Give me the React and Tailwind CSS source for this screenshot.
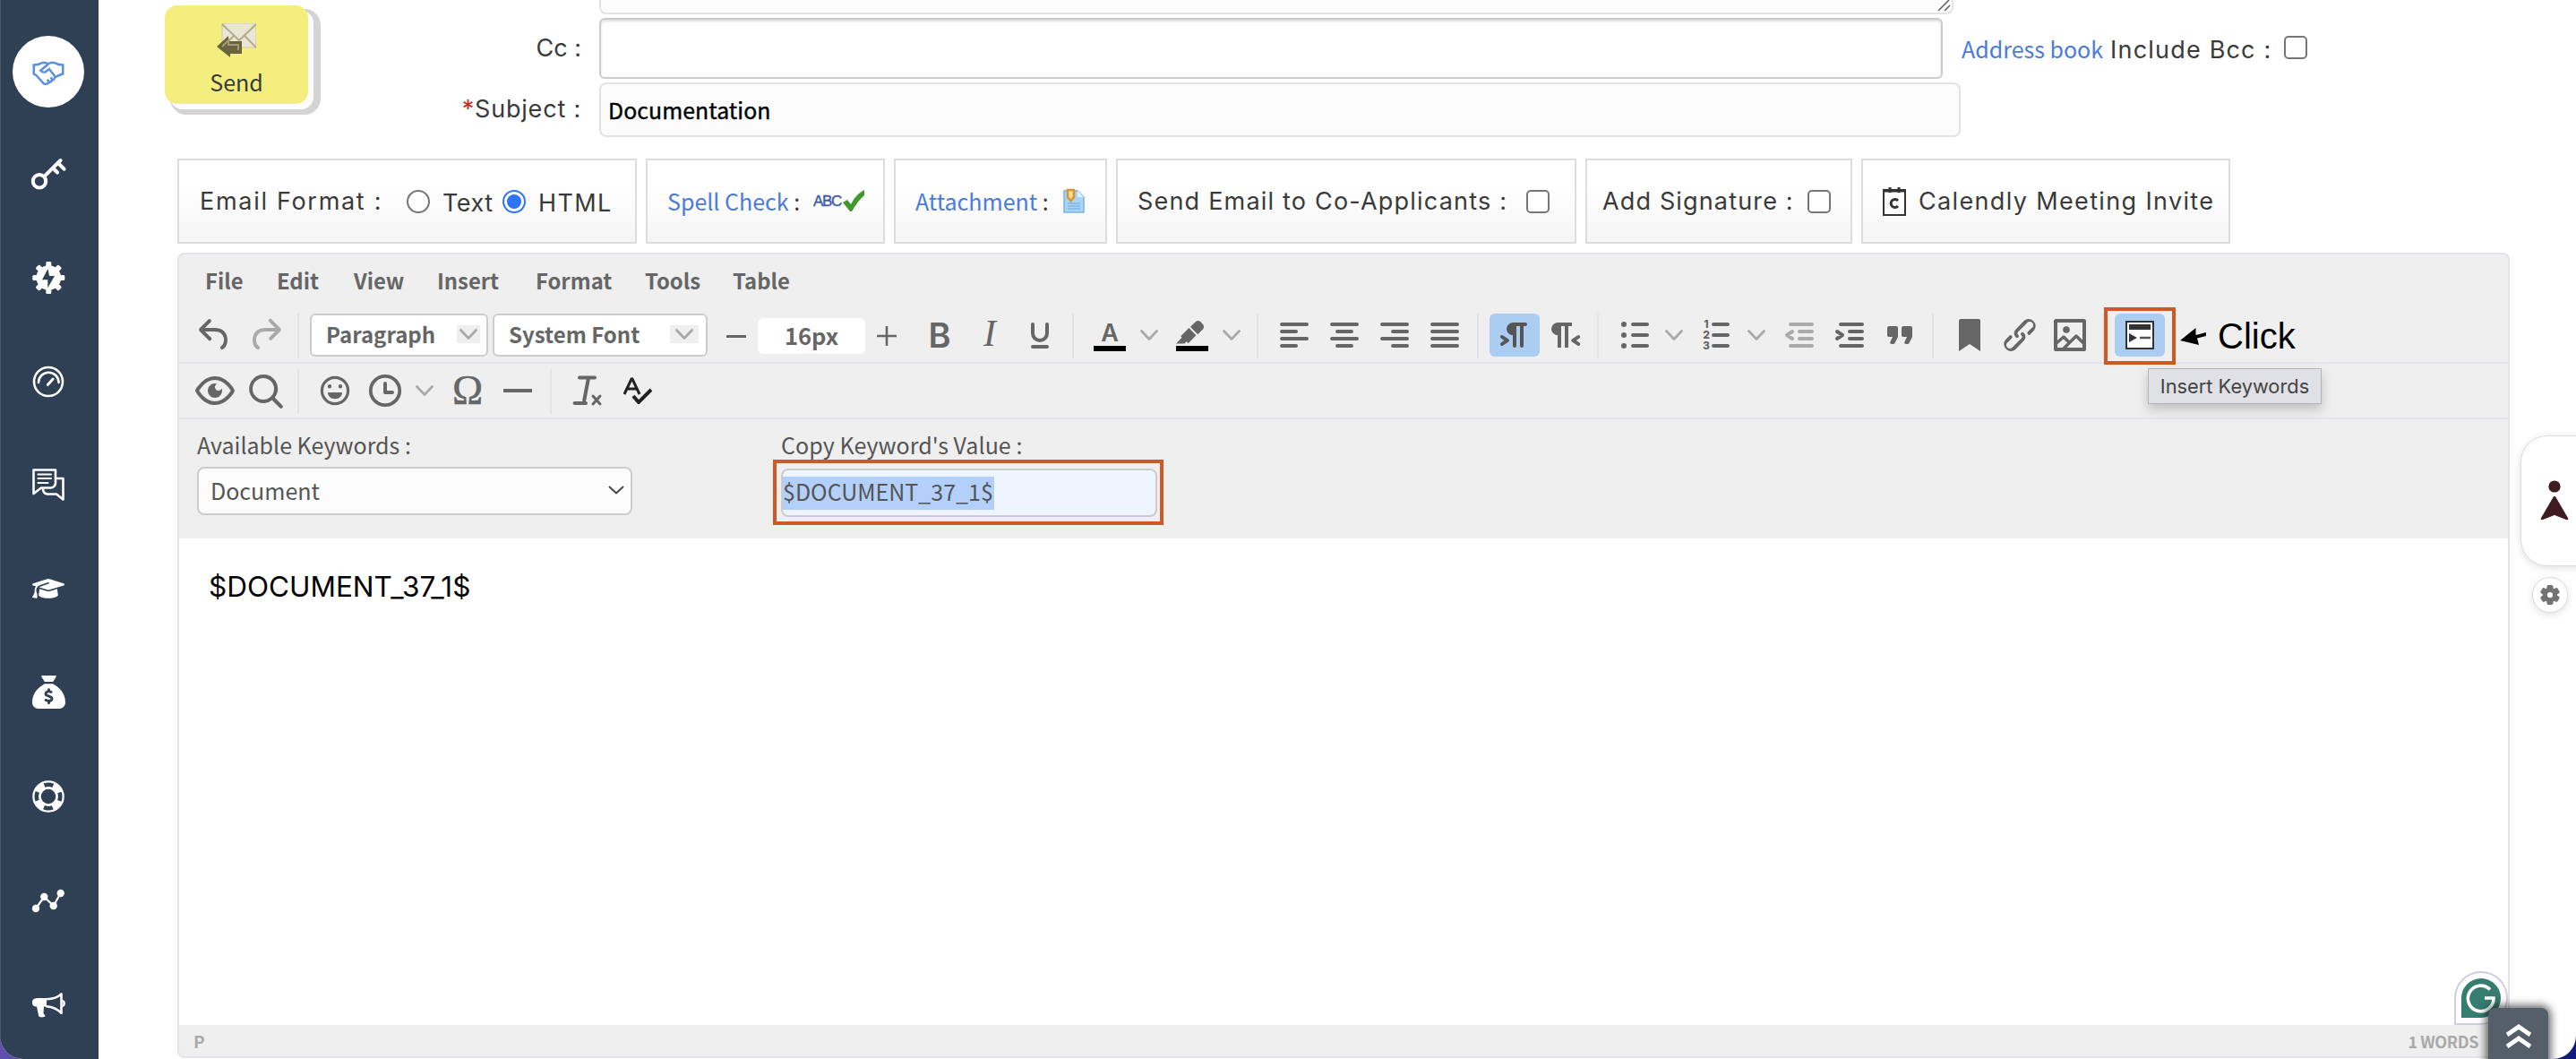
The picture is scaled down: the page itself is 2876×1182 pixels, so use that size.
import React, { useState } from 'react';
import { FaGraduationCap, FaSackDollar } from 'react-icons/fa6';
import { LiaHandshake } from 'react-icons/lia';

const UI = "font-['Noto_Sans_CJK_SC',sans-serif]";
const LABEL = "font-['Inter',sans-serif] text-[27px] leading-[34px] text-[#3a3a3a] whitespace-nowrap";

// 40x40 drawings used in the side navigation
const NavSvg = ({ children }) => (
  <svg viewBox="0 0 40 40" className="size-10" fill="none" stroke="#fff" strokeWidth="2.6" strokeLinejoin="round" strokeLinecap="round">
    {children}
  </svg>
);

const KeyIcon = () => (
  <NavSvg>
    <circle cx="10" cy="28.3" r="7.2" strokeWidth="4" />
    <path d="M15.5 22.8 33.5 5M31.5 8.5l6 6.2M26 14.5l4 4" strokeWidth="4" />
  </NavSvg>
);

const GearBoltIcon = () => (
  <NavSvg>
    <g fill="#fff" stroke="none">
      <circle cx="20.3" cy="20" r="13.8" />
      {[0, 45, 90, 135, 180, 225, 270, 315].map((a) => (
        <rect key={a} x="17.3" y="2" width="6" height="8" rx="1.5" transform={`rotate(${a} 20.3 20)`} />
      ))}
      <path d="M19.5 10 13 22.3h6.3v9L27 18h-6z" fill="#2f4055" />
    </g>
  </NavSvg>
);

const GaugeIcon = () => (
  <NavSvg>
    <circle cx="20" cy="20" r="16" />
    <path d="M9 21a11.3 11.3 0 0 1 22.6 0" />
    <path d="m19.3 23.4 5.8-6.4" strokeWidth="3" />
  </NavSvg>
);

const ChatIcon = () => (
  <NavSvg>
    <path d="M3.5 3.5h24.5v14.5a5.5 5.5 0 0 1-5.5 5.5H12l-8.5 6.5z" />
    <path d="M29 13h7.5v23.5l-7.500-6H19a6 6 0 0 1-5-5" />
    <path d="M8.5 8.5h14.500M8.5 13h14.500M8.5 18h11" strokeWidth="2" />
  </NavSvg>
);

const RingIcon = () => (
  <NavSvg>
    <circle cx="20" cy="20" r="13" strokeWidth="9.5" />
    <circle cx="20" cy="20" r="13.2" stroke="#2f4055" strokeWidth="4.6" strokeLinecap="butt" strokeDasharray="10 10.73" strokeDashoffset="5" />
  </NavSvg>
);

const ChartIcon = () => (
  <NavSvg>
    <path d="M6 29 15.3 16l10.400 10 8-14" strokeWidth="2.2" />
    <g fill="#fff" stroke="none">
      <circle cx="6" cy="29" r="4.2" />
      <circle cx="15.3" cy="16" r="4.2" />
      <circle cx="25.7" cy="26" r="4.2" />
      <circle cx="33.7" cy="12" r="4.2" />
    </g>
  </NavSvg>
);

const HornIcon = () => (
  <NavSvg>
    <path d="M18 14h-9c-4 0-7 1-7 4.800s2 4.800 5 4.800l2 10c.6 2.400 6 2.400 7.500.4l-2-3 .5-7.400h3z" fill="#fff" stroke="none" />
    <path d="M18 15.300c7-.3 13-2.500 16.500-6v21.500c-4-4-10-7-16.500-7.500" />
    <path d="M36.500 17.500c1.500.5 1.500 4.500 0 5" />
  </NavSvg>
);

const navItems = [
  KeyIcon,
  GearBoltIcon,
  GaugeIcon,
  ChatIcon,
  () => <FaGraduationCap className="size-9 scale-y-[0.86]" />,
  () => <FaSackDollar className="size-[37px]" />,
  RingIcon,
  ChartIcon,
  HornIcon,
];

// 24 grid icons of the editor toolbar, drawn at 48px
const Ico = ({ children, color = '#666', line = false }) => (
  <svg
    viewBox="0 0 24 24"
    className="size-12 shrink-0"
    fill={line ? 'none' : color}
    stroke={line ? color : 'none'}
    strokeWidth="2"
    strokeLinecap="round"
    strokeLinejoin="round"
    fillRule="evenodd"
  >
    {children}
  </svg>
);

const Btn = ({ children, active }) => (
  <button className={`flex h-12 w-14 shrink-0 items-center justify-center rounded-md ${active ? 'bg-[#abcdf2]' : ''}`}>{children}</button>
);

const Chevron = () => (
  <svg viewBox="0 0 20 12" className="h-3 w-5" fill="none" stroke="#aaa" strokeWidth="2.8" strokeLinecap="round" strokeLinejoin="round">
    <path d="m1.500 1.500 8.500 9 8.500-9" />
  </svg>
);

const Split = ({ children }) => (
  <div className="flex w-[92px] shrink-0">
    <Btn>{children}</Btn>
    <div className="flex h-12 w-8 items-center justify-center">
      <Chevron />
    </div>
  </div>
);

const Sep = () => <div className="ml-2 mr-3 h-[50px] w-0.5 shrink-0 bg-[#e3e3eb]" />;

const Select = ({ label, className, boxClass }) => (
  <div className={`flex h-12 shrink-0 items-center justify-between rounded-md border-2 border-[#ccc] bg-white pb-0.5 ${className}`}>
    <span className="text-2xl leading-8 font-bold text-[#666] whitespace-nowrap">{label}</span>
    <span className={`flex h-5 items-center justify-center bg-[#efefef] ${boxClass}`}>
      <Chevron />
    </span>
  </div>
);

const Checkbox = ({ className = '' }) => <span className={`inline-block size-[26px] shrink-0 rounded-[5px] border-2 border-[#767676] bg-white ${className}`} />;

const Box = ({ children, className }) => (
  <div className={`flex h-[95px] shrink-0 items-center border-2 border-[#ddd] bg-linear-to-b from-white from-30% to-[#f5f5f5] ${className}`}>{children}</div>
);

const Sidebar = () => (
  <nav className="flex w-[110px] shrink-0 flex-col items-center border-l border-[#4a5a6c] bg-[#2f4055] pr-[3px] pt-10 text-white">
    <div className="flex size-20 items-center justify-center rounded-full bg-white text-[#5b90df]">
      <LiaHandshake className="size-10" />
    </div>
    <div className="mt-[54px] flex flex-col gap-[75.8px]">
      {navItems.map((Item, i) => (
        <div key={i} className="flex size-10 items-center justify-center">
          <Item />
        </div>
      ))}
    </div>
  </nav>
);

const ComposeForm = () => (
  <div className="flex h-[177px] pl-[74px]">
    <button className={`mt-1.5 flex h-[110px] w-40 shrink-0 flex-col items-center rounded-[14px] bg-[#f4ee7e] shadow-[6px_6px_0_0_#fff,10px_8px_0_4px_#d4d4d4] ${UI}`}>
      <svg viewBox="0 0 44 38" className="mt-5 h-[38px] w-11">
        <rect x="6" y="0" width="38" height="27" fill="#e9e6d6" stroke="#cfc9b0" />
        <path d="m6 1 19 18L44 1M6 27l13-13m25 13L31 14" fill="none" stroke="#b3ab8a" strokeWidth="2" />
        <path d="M0 26 13 14v6h15v14H15v4z" fill="#6a6340" />
        <path d="M6 26 13 19v5h11v6" fill="none" stroke="#a39c73" strokeWidth="2" />
      </svg>
      <span className="mt-[11px] text-[25px] leading-8 text-[#3a3a3a]">Send</span>
    </button>

    <div className="flex w-[305px] shrink-0 flex-col items-end">
      <span className={`mt-[37px] ${LABEL}`}>Cc :</span>
      <span className={`mt-[34px] tracking-[0.8px] ${LABEL}`}>
        <span className="text-[#c02b1d]">*</span>Subject :
      </span>
    </div>

    <div className="ml-5 flex flex-col">
      <div className="flex h-4 w-[1512px] justify-end rounded-b-lg border-2 border-t-0 border-[#e3e3e3] bg-[#fcfcfc]">
        <svg viewBox="0 0 16 14" className="h-3.5 w-4" stroke="#666" strokeWidth="1.6">
          <path d="M1 12 13 0M8 12l6-6" />
        </svg>
      </div>
      <div className="mt-1 flex items-center">
        <input className="h-[68px] w-[1500px] rounded-md border-2 border-[#ccc] bg-white shadow-[inset_0_2px_3px_#ddd]" />
        <span className={`ml-[21px] text-[25px] leading-8 text-[#4a7bdc] whitespace-nowrap ${UI}`}>Address book</span>
        <span className={`ml-2 mt-1 tracking-[1.2px] ${LABEL}`}>Include Bcc :</span>
        <Checkbox className="mb-0.5 ml-[13px]" />
      </div>
      <div className={`mt-1 flex h-[61px] w-[1520px] items-center rounded-lg border-2 border-[#e3e3e3] bg-[#fcfcfc] pb-0.5 pl-2 text-[24.8px] leading-8 tracking-[0.1px] text-black [-webkit-text-stroke:0.4px_#000] ${UI}`}>
        Documentation
      </div>
    </div>
  </div>
);

const OptionBoxes = () => (
  <div className="flex gap-2.5 pl-[88px]">
    <Box className="w-[513px] pl-[23px]">
      <span className={`w-[231px] tracking-[1.7px] ${LABEL}`}>Email Format :</span>
      <span className="size-[26px] shrink-0 rounded-full border-2 border-[#767676] bg-white" />
      <span className={`ml-3.5 w-[67px] pt-1 tracking-[0.5px] ${LABEL}`}>Text</span>
      <span className="flex size-[26px] shrink-0 items-center justify-center rounded-full border-2 border-[#2f74f6] bg-white">
        <span className="size-4 rounded-full bg-[#2f74f6]" />
      </span>
      <span className={`ml-3.5 pt-1 tracking-[1.4px] ${LABEL}`}>HTML</span>
    </Box>
    <Box className={`w-[267px] pb-0.5 pl-[22px] text-[25px] leading-8 text-[#4a7bdc] ${UI}`}>
      <span className="w-[163px] whitespace-nowrap">
        Spell Check <span className="text-[#3a3a3a]">:</span>
      </span>
      <span className="w-[31px] pt-0.5 font-['Liberation_Sans',sans-serif] text-[17px] tracking-[-1.4px] text-[#4059a6] [-webkit-text-stroke:0.4px_#4059a6]">ABC</span>
      <svg viewBox="0 0 24 24" className="ml-0.5 size-6" fill="#3f9a2b">
        <path d="M0 14 5 11l4 5C13 8 18 3 24 0v6C18 11 14 17 10 24H8z" />
      </svg>
    </Box>
    <Box className={`w-[238px] pb-0.5 pl-[22px] text-[25px] leading-8 text-[#4a7bdc] ${UI}`}>
      <span className="w-[165px] whitespace-nowrap">
        Attachment <span className="text-[#3a3a3a]">:</span>
      </span>
      <svg viewBox="0 0 24 28" className="h-7 w-6">
        <path d="M1 3h15l7 7v17H1z" fill="#a9d4f5" stroke="#7ab3e3" strokeWidth="1.5" />
        <path d="M16 3v7h7" fill="#e2f2fd" />
        <path d="M5 17h14M5 20h14M5 23h14" stroke="#6ea8da" />
        <path d="M5 2h7v8l-3.500 4L5 10z" fill="#f6dca0" stroke="#d8962b" strokeWidth="2.5" />
      </svg>
    </Box>
    <Box className="w-[514px] pl-[22px]">
      <span className={`w-[434px] tracking-[1.2px] ${LABEL}`}>Send Email to Co-Applicants :</span>
      <Checkbox />
    </Box>
    <Box className="w-[298px] pl-[17px]">
      <span className={`w-[229px] tracking-[1.15px] ${LABEL}`}>Add Signature :</span>
      <Checkbox />
    </Box>
    <Box className="w-[412px] pl-[22px]">
      <svg viewBox="0 0 26 32" className="h-8 w-[26px]" fill="none" stroke="#333">
        <rect x="1" y="3" width="24" height="28" strokeWidth="2" />
        <path d="M1 4h24" strokeWidth="3" />
        <path d="M8 0v6M18 0v6" strokeWidth="3" />
        <path d="M17 15a4.500 4.500 0 1 0 0 6" strokeWidth="3" />
      </svg>
      <span className={`ml-3.5 tracking-[1.35px] ${LABEL}`}>Calendly Meeting Invite</span>
    </Box>
  </div>
);

const menus = [
  ['File', 'w-20'],
  ['Edit', 'w-[86px]'],
  ['View', 'w-[93px]'],
  ['Insert', 'w-[110px]'],
  ['Format', 'w-[122px]'],
  ['Tools', 'w-[98px]'],
  ['Table', 'w-20'],
];

const ToolbarTop = () => (
  <div className="flex h-16 items-start border-b-2 border-[#e3e3eb] pl-3 pt-2">
    <Btn>
      <Ico><path d="M6.400 8H12c3.700 0 6.200 2 6.800 5.100.6 2.700-.4 5.600-2.300 6.800a1 1 0 0 1-1-1.800c1.100-.6 1.800-2.700 1.400-4.600-.5-2.100-2.100-3.500-4.900-3.500H6.400l3.300 3.300a1 1 0 1 1-1.400 1.400l-5-5a1 1 0 0 1 0-1.400l5-5a1 1 0 0 1 1.400 1.400L6.400 8Z" /></Ico>
    </Btn>
    <Btn>
      <Ico color="#aaa"><path d="M17.600 10H12c-2.800 0-4.400 1.400-4.900 3.500-.4 2 .3 4 1.400 4.600a1 1 0 1 1-1 1.800c-2-1.200-2.900-4.100-2.300-6.800.6-3 3-5.100 6.800-5.100h5.600l-3.300-3.300a1 1 0 1 1 1.400-1.400l5 5a1 1 0 0 1 0 1.400l-5 5a1 1 0 0 1-1.400-1.400l3.300-3.300Z" /></Ico>
    </Btn>
    <Sep />
    <Select label="Paragraph" className="w-[199px] pl-4 pr-[7px]" boxClass="w-[26px]" />
    <Select label="System Font" className="ml-[5px] w-60 pl-4 pr-2" boxClass="w-8" />
    <div className="ml-2 mr-[7px] flex h-[50px] items-center">
      <span className="flex w-12 justify-center"><span className="h-[3px] w-[22px] bg-[#666]" /></span>
      <span className="flex h-10 w-[120px] items-center justify-center rounded-md bg-white pb-0.5 text-[25.5px] leading-8 font-bold text-[#666]">16px</span>
      <svg viewBox="0 0 48 22" className="h-[22px] w-12" stroke="#666" strokeWidth="2.6">
        <path d="M13 11h22M24 0v22" />
      </svg>
    </div>
    <Btn>
      <span className="font-['Inter',sans-serif] text-[38px] leading-[48px] font-semibold text-[#666]">B</span>
    </Btn>
    <Btn>
      <span className="pb-1 font-['Liberation_Serif',serif] text-[42px] leading-[48px] italic text-[#666]">I</span>
    </Btn>
    <Btn>
      <Ico line><path d="M8 6v5a4 4 0 0 0 8 0V6M8 18.500h8" /></Ico>
    </Btn>
    <Sep />
    <Split>
      <span className="flex h-12 w-9 flex-col items-center">
        <span className="mt-2 h-7 font-['Inter',sans-serif] text-[27px] leading-7 font-semibold text-[#666]">A</span>
        <span className="h-1.5 w-9 bg-black" />
      </span>
    </Split>
    <Split>
      <Ico>
        <path d="M3 18h18v3H3z" fill="#000" />
        <path d="M7.700 16.700H3l3.300-3.300-.7-.8L10.200 8l4 4.100-4 4.200c-.2.2-.6.2-.8 0l-.6-.7-1.100 1.100zm5-7.500L11 7.400l3-2.900a2 2 0 0 1 2.600 0L18 6c.7.7.7 2 0 2.700l-2.900 2.900-1.800-1.800-.5-.6" />
      </Ico>
    </Split>
    <Sep />
    <Btn><Ico line><path d="M5 6h14M5 10h8M5 14h14M5 18h8" /></Ico></Btn>
    <Btn><Ico line><path d="M5 6h14M8 10h8M5 14h14M8 18h8" /></Ico></Btn>
    <Btn><Ico line><path d="M5 6h14M11 10h8M5 14h14M11 18h8" /></Ico></Btn>
    <Btn><Ico line><path d="M5 6h14M5 10h14M5 14h14M5 18h14" /></Ico></Btn>
    <Sep />
    <Btn active>
      <Ico color="#555"><path d="M11 5h7a1 1 0 0 1 0 2h-1v11a1 1 0 0 1-2 0V7h-2v11a1 1 0 0 1-2 0v-6c-.5 0-1 0-1.400-.3A3.400 3.400 0 0 1 7.800 10a3.300 3.300 0 0 1 0-2.800 3.400 3.400 0 0 1 1.800-1.800L11 5ZM4.400 16.200 6.200 15l-1.800-1.200a1 1 0 0 1 1.200-1.600l3 2a1 1 0 0 1 0 1.600l-3 2a1 1 0 1 1-1.200-1.600Z" /></Ico>
    </Btn>
    <Btn>
      <Ico><path d="M8 5h8v2h-2v12h-2V7h-2v12H8v-7c-.5 0-1 0-1.400-.3A3.400 3.400 0 0 1 4.800 10a3.300 3.300 0 0 1 0-2.800 3.400 3.400 0 0 1 1.800-1.800L8 5Zm12.200 11.200a1 1 0 1 1-1.200 1.600l-3-2a1 1 0 0 1 0-1.600l3-2a1 1 0 1 1 1.200 1.600L18.400 15l1.800 1.200Z" /></Ico>
    </Btn>
    <Sep />
    <Split>
      <Ico line>
        <path d="M11 6h8M11 12h8M11 18h8" />
        <path d="M6 6h0M6 12h0M6 18h0" strokeWidth="3" />
      </Ico>
    </Split>
    <Split>
      <span className="-ml-1 flex h-12 w-8 items-center">
        <span className="flex w-3 flex-col font-['Inter',sans-serif] text-[12px] leading-3 font-extrabold text-[#666]">
          <span>1</span>
          <span>2</span>
          <span>3</span>
        </span>
        <svg viewBox="0 0 20 28" className="h-7 w-5" stroke="#666" strokeWidth="4" strokeLinecap="round">
          <path d="M2 2h16M2 14h16M2 26h16" />
        </svg>
      </span>
    </Split>
    <Btn><Ico line color="#aaa"><path d="M7 6h12M12 10h7M12 14h7M7 18h12M8 10l-3 2 3 2" /></Ico></Btn>
    <Btn><Ico line><path d="M7 6h12M12 10h7M12 14h7M7 18h12M5 10l3 2-3 2" /></Ico></Btn>
    <Btn>
      <Ico><path d="M7.500 17h.9c.4 0 .7-.2.9-.6L11 13V8c0-.6-.4-1-1-1H6a1 1 0 0 0-1 1v4c0 .6.400 1 1 1h2l-1.300 2.700a1 1 0 0 0 .8 1.300Zm8 0h.9c.4 0 .7-.2.9-.6L19 13V8c0-.6-.4-1-1-1h-4a1 1 0 0 0-1 1v4c0 .6.400 1 1 1h2l-1.300 2.700a1 1 0 0 0 .8 1.300Z" /></Ico>
    </Btn>
    <Sep />
    <Btn><Ico><path d="M6 4v17l6-4 6 4V4c0-.6-.4-1-1-1H7a1 1 0 0 0-1 1Z" /></Ico></Btn>
    <Btn>
      <Ico><path d="M6.200 12.300a1 1 0 0 1 1.400 1.400l-2 2a2 2 0 1 0 2.600 2.800l4.800-4.800a1 1 0 0 0 0-1.400 1 1 0 1 1 1.400-1.300 2.900 2.900 0 0 1 0 4L9.600 20a3.900 3.900 0 0 1-5.500-5.500l2-2Zm11.600-.6a1 1 0 0 1-1.400-1.400l2-2a2 2 0 1 0-2.600-2.800L11 10.300a1 1 0 0 0 0 1.400A1 1 0 1 1 9.600 13a2.900 2.900 0 0 1 0-4L14.400 4a3.900 3.900 0 0 1 5.500 5.500l-2 2Z" /></Ico>
    </Btn>
    <Btn>
      <Ico line>
        <rect x="4" y="4" width="16" height="16" rx=".3" />
        <path d="m4.500 16.500 4-3.500 3 3M8.500 19.500l7-7 4.500 4.500" strokeWidth="1.7" />
        <circle cx="10" cy="9" r="1.9" fill="#666" stroke="none" />
      </Ico>
    </Btn>
    <Sep />
    <div className="relative">
      <Btn active>
        <svg viewBox="0 0 32 32" className="size-8">
          <rect x="1" y="1" width="30" height="30" fill="#fff" stroke="#333" strokeWidth="2" />
          <rect x="4" y="4" width="24" height="6" fill="#333" />
          <path d="M4 14v10l9-5z" fill="#333" />
          <path d="M16 19h12" stroke="#555" strokeWidth="2.4" />
        </svg>
      </Btn>
      <div className="absolute -left-3 -top-[7px] h-16 w-20 border-4 border-[#cb5a24]" />
      <div className="absolute left-[37px] top-[61px] z-10 flex h-10 w-[194px] items-center justify-center border border-[#b5b5b8] bg-[#e0e1e6] font-['Inter',sans-serif] text-[21.8px] text-[#444] whitespace-nowrap shadow-[0_6px_12px_rgba(0,0,0,0.2)]">
        Insert Keywords
      </div>
    </div>
    <svg viewBox="0 0 30 20" className="ml-[17px] mt-4 h-5 w-[30px]">
      <path d="M0 14 17.500 0v8L29 5v4l-10 2.500L21 19z" />
    </svg>
    <span className="ml-3 font-['Liberation_Sans',sans-serif] text-[40px] leading-[50px] text-black">Click</span>
  </div>
);

const ToolbarBottom = () => (
  <div className="flex h-[62px] items-start border-b-2 border-[#e3e3eb] pl-3 pt-1.5">
    <Btn>
      <Ico><path d="M3.500 12.500c.5.8 1.100 1.600 1.800 2.300 2 2 4.200 3.200 6.700 3.200s4.700-1.200 6.700-3.200a16.200 16.200 0 0 0 2.100-2.800 15.700 15.700 0 0 0-2.100-2.800c-2-2-4.200-3.200-6.700-3.200a9.300 9.300 0 0 0-6.700 3.200A16.200 16.200 0 0 0 3.200 12c0 .2.200.3.300.5Zm-2.400-1 .7-1.200L4 7.800C6.200 5.400 8.900 4 12 4c3 0 5.800 1.400 8.100 3.800a18.200 18.200 0 0 1 2.800 3.700v1l-.7 1.200a18.200 18.200 0 0 1-2.100 2.500c-2.300 2.400-5 3.800-8.100 3.800-3 0-5.800-1.400-8.100-3.800a18.200 18.200 0 0 1-2.800-3.700 1 1 0 0 1 0-1Zm12-3.300a2 2 0 1 0 2.700 2.600 4 4 0 1 1-2.600-2.600Z" /></Ico>
    </Btn>
    <Btn>
      <Ico><path d="M16 17.300a8 8 0 1 1 1.400-1.400l4.300 4.400a1 1 0 0 1-1.400 1.400l-4.400-4.300Zm-5-.3a6 6 0 1 0 0-12 6 6 0 0 0 0 12Z" /></Ico>
    </Btn>
    <Sep />
    <Btn>
      <Ico line>
        <circle cx="12" cy="12" r="7.3" strokeWidth="1.6" />
        <path d="M9 9.600h0M15 9.600h0" strokeWidth="2.2" />
        <path d="M8 13h8c0 2.300-1.800 3.600-4 3.600S8 15.300 8 13Z" fill="#666" stroke="none" />
      </Ico>
    </Btn>
    <Split>
      <Ico line>
        <circle cx="12" cy="12" r="8.1" strokeWidth="1.9" />
        <path d="M12 8v5h4" />
      </Ico>
    </Split>
    <Btn><span className="font-['Liberation_Serif',serif] text-[46px] leading-[46px] text-[#666] [-webkit-text-stroke:0.5px_#666]">Ω</span></Btn>
    <Btn><span className="h-1 w-8 bg-[#666]" /></Btn>
    <Sep />
    <Btn>
      <Ico line>
        <path d="M7.500 4.800h8.500M12.500 5l-2.400 12.500" />
        <path d="M4.800 19h6.200" />
        <path d="m15 15 4 4.500m0-4.500-4 4.500" strokeWidth="1.5" />
      </Ico>
    </Btn>
    <Btn>
      <svg viewBox="0 0 32 30" className="h-[30px] w-8" fill="none" stroke="#222" strokeWidth="3">
        <path d="m1 19 8-17h1l8 17M4 13h11" />
        <path d="m11 21 6 7 14-14" strokeWidth="4" />
      </svg>
    </Btn>
  </div>
);

const KeywordPanel = () => (
  <div className="flex h-[133px] pl-5 pt-[13px] text-[25px] text-[#555]">
    <div className="w-[652px]">
      <p className="leading-[30px]">Available Keywords :</p>
      <div className="mt-2.5 flex h-[54px] w-[486px] items-center justify-between rounded-lg border-2 border-[#ccc] bg-[#fcfcfc] pb-0.5 pl-[13px] pr-[7px]">
        <span className="leading-8">Document</span>
        <svg viewBox="0 0 18 10" className="h-2.5 w-[18px]" fill="none" stroke="#444" strokeWidth="2">
          <path d="m1 1 8 7.500L17 1" />
        </svg>
      </div>
    </div>
    <div>
      <p className="leading-[30px] tracking-[0.05px]">Copy Keyword's Value :</p>
      <div className="relative mt-3 flex h-[54px] w-[420px] items-center rounded-lg border-2 border-[#ccc] bg-[#eef5fe]">
        <span className="h-[37px] w-[236px] bg-[#b3d0fa] leading-[33px]">$DOCUMENT_37_1$</span>
        <div className="absolute -left-[11px] -top-3 h-[73px] w-[436px] border-4 border-[#cb5a24]" />
      </div>
    </div>
  </div>
);

const FloatingWidgets = () => (
  <>
    <div className="absolute left-[2814px] top-[486px] h-[146px] w-20 rounded-l-[30px] border border-[#ddd] bg-white shadow-[0_2px_10px_rgba(0,0,0,0.12)]">
      <svg viewBox="0 0 32 46" className="ml-[21px] mt-[49px] h-[46px] w-8" fill="#3e1c22">
        <circle cx="16" cy="7" r="6.6" />
        <path d="M16 19 30 43l-14-5.500L2 43z" stroke="#3e1c22" strokeWidth="2.5" strokeLinejoin="round" />
      </svg>
    </div>
    <div className="absolute left-[2827px] top-[644px] flex size-10 items-center justify-center rounded-full border border-[#ddd] bg-white shadow-[0_2px_8px_rgba(0,0,0,0.12)]">
      <svg viewBox="0 0 22 22" className="size-[22px]" fill="#737373">
        <circle cx="11" cy="11" r="5.6" stroke="#737373" strokeWidth="5" fill="none" />
        {[0, 60, 120, 180, 240, 300].map((a) => (
          <rect key={a} x="7.500" y="0" width="7" height="6" rx="2" transform={`rotate(${a} 11 11)`} />
        ))}
      </svg>
    </div>
    <div className="absolute left-[2740px] top-[1084px] size-[60px] rounded-t-full rounded-br-full border-2 border-[#cdcfe0] bg-white p-1.5">
      <div className="size-11 rounded-t-full rounded-br-full bg-[#367d71]">
        <svg viewBox="0 0 44 44" className="size-11" fill="none" stroke="#fff" strokeWidth="3.6">
          <path d="M32 12.500A14.300 14.300 0 1 0 36 22H26" />
        </svg>
      </div>
    </div>
    <div className="absolute left-[2778px] top-[1125px] flex h-20 w-[67px] justify-center rounded-lg bg-[#555f69] pt-[17px] shadow-[0_0_10px_3px_rgba(0,0,0,0.6)]">
      <svg viewBox="0 0 28 28" className="size-7" fill="none" stroke="#fff" strokeWidth="5">
        <path d="m1 13 13-9 13 9M1 26l13-9 13 9" />
      </svg>
    </div>
  </>
);

export default function App() {
  const [body] = useState('$DOCUMENT_37_1$');

  return (
    <div className="h-[1182px] w-[2876px] overflow-hidden bg-linear-to-r from-[#5f50ae] to-[#0f1d78]">
      <div className="relative flex h-full overflow-hidden rounded-b-[26px] bg-white">
        <Sidebar />
        <main className="flex flex-1 flex-col">
          <ComposeForm />
          <OptionBoxes />
          <section className={`ml-[88px] mt-[10px] h-[899px] w-[2604px] overflow-hidden rounded-lg border-2 border-[#e3e3eb] bg-[#efefef] ${UI}`}>
            <div className="flex h-[58px] items-center pl-[29px]">
              {menus.map(([name, width]) => (
                <span key={name} className={`text-[23.8px] leading-8 font-bold text-[#666] ${width}`}>{name}</span>
              ))}
            </div>
            <ToolbarTop />
            <ToolbarBottom />
            <KeywordPanel />
            <div className="h-[543px] bg-white pl-[33px] pt-[34px] font-['Inter',sans-serif] text-[31.5px] leading-10 text-black">{body}</div>
            <div className="flex h-[35px] items-center justify-between pl-4 pr-[33px] text-[18px] leading-6 font-bold tracking-[-0.4px] text-[#aaa]">
              <span className="text-[19px]">P</span>
              <span>1 WORDS</span>
            </div>
          </section>
        </main>
        <FloatingWidgets />
      </div>
    </div>
  );
}
